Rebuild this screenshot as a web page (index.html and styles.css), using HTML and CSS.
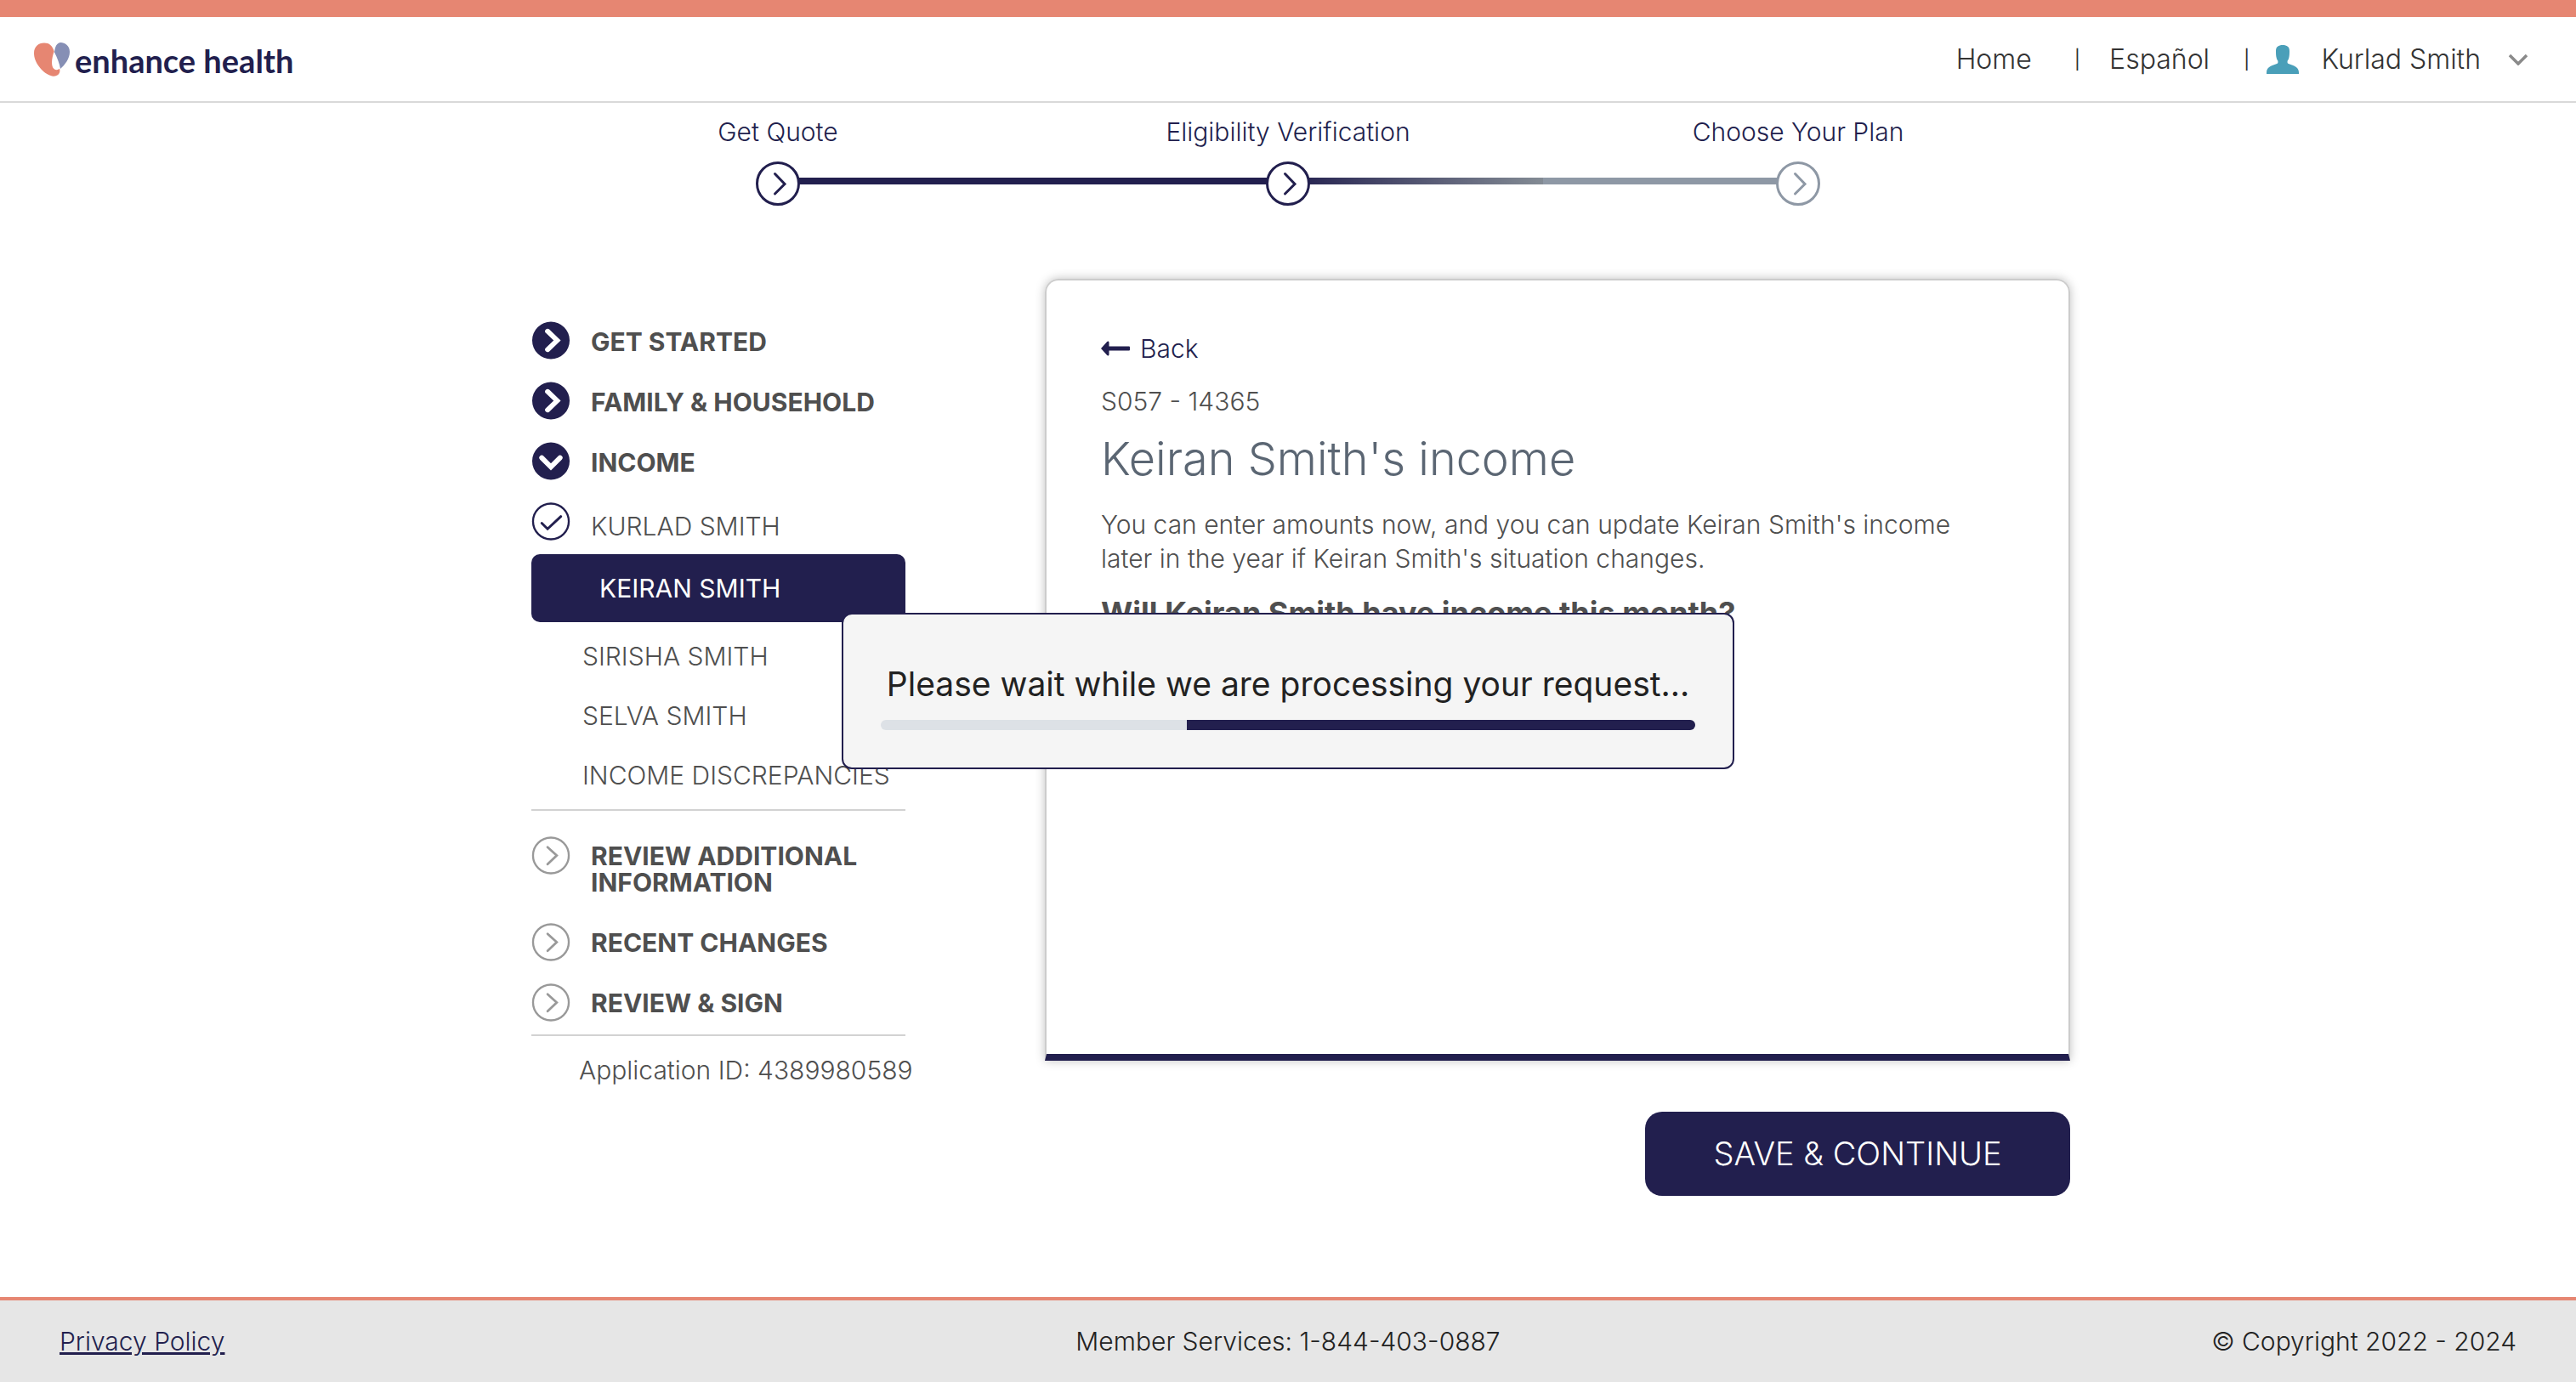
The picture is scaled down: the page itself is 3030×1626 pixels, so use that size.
FILE: index.html
```html
<!DOCTYPE html>
<html lang="en">
<head>
<meta charset="utf-8">
<meta name="viewport" content="width=device-width, initial-scale=1">
<title>Income - enhance health</title>
<link rel="stylesheet" href="styles.css">
</head>
<body>
<svg class="sprite" aria-hidden="true">
  <symbol id="i-step" viewBox="0 0 52 52"><circle cx="26" cy="26" r="24.5" fill="#fff" stroke="currentColor" stroke-width="3"/><path d="M22.500 14.500 34 26.500 22.500 38" fill="none" stroke="currentColor" stroke-width="3" stroke-linecap="round"/></symbol>
  <symbol id="i-solid" viewBox="0 0 46 46"><circle cx="23" cy="23" r="22.500" fill="currentColor"/><path d="M19 12 30.500 23 19 34" fill="none" stroke="#fff" stroke-width="6" stroke-linecap="round" stroke-linejoin="miter"/></symbol>
  <symbol id="i-open" viewBox="0 0 46 46"><circle cx="23" cy="23" r="22.500" fill="currentColor"/><path d="M12 19 23 30 34 19" fill="none" stroke="#fff" stroke-width="6" stroke-linecap="round"/></symbol>
  <symbol id="i-check" viewBox="0 0 46 46"><circle cx="23" cy="23" r="21.500" fill="none" stroke="currentColor" stroke-width="2.400"/><path d="M12 25 19 32 35 17" fill="none" stroke="currentColor" stroke-width="3" stroke-linecap="round"/></symbol>
  <symbol id="i-next" viewBox="0 0 46 46"><circle cx="23" cy="23" r="21.500" fill="none" stroke="currentColor" stroke-width="2.400"/><path d="M19 13 30 23 19 33.500" fill="none" stroke="currentColor" stroke-width="2.800" stroke-linecap="round"/></symbol>
</svg>

<header class="site-header">
  <a class="logo" href="#">
    <svg class="logo-mark" viewBox="0 0 42 40" aria-hidden="true">
      <path fill="#e68672" d="M12 .5C5 .5 0 5 0 12.500c0 11 9.500 22.500 19 26.300 5 2 10.500.5 11.300-4.500.2-1.500 0-2.800-.3-3.500-1.500 1.700-4.500 2-6.500.2-4-3.500-2.500-13.500.2-20.500C21.500 3.500 18 .5 12 .5z"/>
      <path fill="#868fb5" d="M31.500 0c4.500 0 10.500 3.500 10.500 11 0 8-5.500 15-11 20-1-6-3.500-13-7-19.500C24.500 5 27 0 31.500 0z"/>
    </svg>
    <span>enhance health</span>
  </a>
  <nav class="top-nav" aria-label="Account">
    <a href="#">Home</a>
    <span class="bar">|</span>
    <a href="#">Español</a>
    <span class="bar bar-user">|</span>
    <button class="user" type="button">
      <svg class="user-icon" viewBox="0 0 38 34" aria-hidden="true"><path fill="#4a9fb9" d="M19 0c5 0 8 2 8 7 0 4-.2 6-.7 8-.3 1.500-.9 2.500-1.600 3.500-.3 1.600-.2 2.700.6 3.200C30 23.700 38 25 38 32v2H0v-2c0-7 8-8.300 12.700-10.300.8-.5.900-1.600.6-3.200-.7-1-1.300-2-1.600-3.500-.5-2-.7-4-.7-8 0-5 3-7 8-7z"/></svg>
      <span>Kurlad Smith</span>
      <svg class="user-caret" viewBox="0 0 24 14" aria-hidden="true"><path d="M2 2l10 10L22 2" fill="none" stroke="#8a8a8a" stroke-width="3.500"/></svg>
    </button>
  </nav>
</header>

<ol class="steps">
  <li class="step done"><span>Get Quote</span><svg class="step-icon" aria-hidden="true"><use href="#i-step"/></svg></li>
  <li class="step current"><span>Eligibility Verification</span><svg class="step-icon" aria-hidden="true"><use href="#i-step"/></svg></li>
  <li class="step todo"><span>Choose Your Plan</span><svg class="step-icon" aria-hidden="true"><use href="#i-step"/></svg></li>
</ol>

<main class="content">
  <nav class="side" aria-label="Application sections">
    <ul class="group">
      <li class="row"><svg class="icon" aria-hidden="true"><use href="#i-solid"/></svg><a class="section" href="#">GET STARTED</a></li>
      <li class="row"><svg class="icon" aria-hidden="true"><use href="#i-solid"/></svg><a class="section" href="#">FAMILY &amp; HOUSEHOLD</a></li>
      <li class="row"><svg class="icon" aria-hidden="true"><use href="#i-open"/></svg><a class="section" href="#">INCOME</a></li>
      <li class="row"><svg class="icon" aria-hidden="true"><use href="#i-check"/></svg><a class="person" href="#">KURLAD SMITH</a></li>
    </ul>
    <a class="active" href="#" aria-current="page">KEIRAN SMITH</a>
    <ul class="sub">
      <li><a href="#">SIRISHA SMITH</a></li>
      <li><a href="#">SELVA SMITH</a></li>
      <li><a href="#">INCOME DISCREPANCIES</a></li>
    </ul>
    <ul class="group pending">
      <li class="row"><svg class="icon" aria-hidden="true"><use href="#i-next"/></svg><a class="section" href="#">REVIEW ADDITIONAL INFORMATION</a></li>
      <li class="row"><svg class="icon" aria-hidden="true"><use href="#i-next"/></svg><a class="section" href="#">RECENT CHANGES</a></li>
      <li class="row"><svg class="icon" aria-hidden="true"><use href="#i-next"/></svg><a class="section" href="#">REVIEW &amp; SIGN</a></li>
    </ul>
    <p class="app-id">Application ID: 4389980589</p>
  </nav>

  <div class="main-col">
    <section class="card">
      <a class="back" href="#"><svg class="back-icon" viewBox="0 0 34 18" aria-hidden="true"><path fill="currentColor" d="M0 9 7 1.200C8 0 9.500.4 9.500 2v4.500H33q1 0 1 1v3q0 1-1 1H9.500V16c0 1.600-1.500 2-2.500.8z"/></svg>Back</a>
      <p class="code">S057 - 14365</p>
      <h1>Keiran Smith's income</h1>
      <p class="intro">You can enter amounts now, and you can update Keiran Smith's income later in the year if Keiran Smith's situation changes.</p>
      <h2>Will Keiran Smith have income this month?</h2>
    </section>
    <button class="save" type="button">SAVE &amp; CONTINUE</button>
  </div>
</main>

<footer class="site-footer">
  <a href="#">Privacy Policy</a>
  <span>Member Services: 1-844-403-0887</span>
  <span class="copy">© Copyright 2022 - 2024</span>
</footer>

<div class="wait" role="dialog" aria-labelledby="wait-text">
  <p id="wait-text">Please wait while we are processing your request...</p>
  <div class="track" role="progressbar" aria-labelledby="wait-text"><div class="fill"></div></div>
</div>
</body>
</html>
```
FILE: styles.css
```css
:root {
  --navy: #221f4e;
  --coral: #e68672;
  --text: #4f4f4f;
  --slate: #8e98a5;
}

* { box-sizing: border-box; }

body {
  margin: 0;
  min-height: 100vh;
  display: flex;
  flex-direction: column;
  background: #fff;
  color: var(--text);
  font: 300 30px/40px Inter, "Open Sans", sans-serif;
}

a { color: inherit; text-decoration: none; }
button { font: inherit; color: inherit; border: 0; background: none; cursor: pointer; }
ul, ol { list-style: none; margin: 0; padding: 0; }
h1, h2, p { margin: 0; }
.sprite { display: none; }

.site-header {
  display: flex;
  justify-content: space-between;
  align-items: center;
  border-top: 20px solid var(--coral);
  border-bottom: 2px solid #d9d9d9;
  padding: 20px 56px 19px 40px;
}
.logo {
  display: flex;
  align-items: center;
  gap: 6px;
  height: 60px;
  color: var(--navy);
  font: 700 38px/40px Lato, sans-serif;
}
.logo-mark { width: 42px; height: 40px; }
.logo span { padding-top: 2px; }
.top-nav {
  display: flex;
  align-items: center;
  color: #333;
  font-size: 32px;
}
.bar { padding: 0 34px 0 50px; font-size: 22px; font-weight: 400; }
.bar-user { padding: 0 20px 0 40px; }
.user { display: flex; align-items: center; padding: 0; }
.user-icon { width: 38px; height: 34px; margin-right: 26px; }
.user-caret { width: 24px; height: 14px; margin-left: 32px; }

.steps {
  display: grid;
  grid-template-columns: repeat(3, 1fr);
  width: 100%;
  max-width: 1800px;
  margin: 0 auto;
  padding-top: 14px;
  color: var(--navy);
}
.step {
  position: relative;
  display: flex;
  flex-direction: column;
  align-items: center;
  gap: 15px;
}
.step-icon { position: relative; z-index: 1; width: 52px; height: 52px; }
.todo .step-icon { color: var(--slate); }
.done::after, .current::after {
  content: "";
  position: absolute;
  left: 50%;
  bottom: 25px;
  width: 100%;
  height: 8px;
  background: var(--navy);
}
.current::after {
  background: linear-gradient(to right, var(--navy), #838b94 50%, var(--slate) 50%);
}

.content {
  display: grid;
  grid-template-columns: minmax(0, 440fr) minmax(0, 1206fr);
  column-gap: 164px;
  width: 100%;
  max-width: 1840px;
  margin: 0 auto;
  padding: 86px 0 119px 30px;
}

.side { padding-top: 50px; }
.group { display: grid; gap: 26px; color: var(--text); }
.row { display: flex; align-items: flex-start; gap: 24px; height: 45px; }
.icon { flex: none; width: 46px; height: 45px; color: var(--navy); }
.section { padding-top: 9px; font-weight: 700; line-height: 31px; }
.person { padding-top: 8px; }
.active {
  display: block;
  margin-top: 16px;
  padding: 20px 80px;
  border-radius: 10px;
  background: var(--navy);
  color: #fff;
  font-weight: 400;
}
.sub {
  display: grid;
  gap: 30px;
  padding: 20px 0 20px 60px;
  border-bottom: 2px solid #d2d2d2;
  white-space: nowrap;
}
.pending {
  padding: 30px 0 15px;
  border-bottom: 2px solid #d2d2d2;
}
.pending .row { height: auto; }
.pending .icon { color: #999; }
.pending .section { padding: 8px 0 6px; }
.app-id { padding: 20px 0 0 56px; white-space: nowrap; }

.main-col { display: flex; flex-direction: column; align-items: flex-end; gap: 60px; }
.card {
  width: 100%;
  min-height: 920px;
  padding: 60px 64px;
  border: 2px solid #ccc;
  border-bottom: 8px solid var(--navy);
  border-radius: 16px 16px 0 0;
  box-shadow: 0 0 12px rgba(0, 0, 0, .25);
}
.back { display: flex; align-items: center; gap: 12px; color: var(--navy); }
.back-icon { width: 34px; height: 18px; }
.code { padding-top: 22px; }
h1 {
  padding-top: 12px;
  color: #5b6673;
  font-size: 54px;
  font-weight: 300;
  line-height: 72px;
}
.intro { max-width: 1040px; padding-top: 21px; }
h2 { padding-top: 24px; font-size: 36px; line-height: 40px; }
.save {
  width: 500px;
  padding: 29px 0 30px;
  border-radius: 20px;
  background: var(--navy);
  color: #fff;
  font-size: 38px;
}

.site-footer {
  display: grid;
  grid-template-columns: 1fr auto 1fr;
  margin-top: auto;
  padding: 28px 70px;
  border-top: 4px solid var(--coral);
  background: #e6e6e6;
  color: #222;
}
.site-footer a {
  justify-self: start;
  color: var(--navy);
  text-decoration: underline;
}
.copy { text-align: right; }

.wait {
  position: fixed;
  z-index: 5;
  top: 50%;
  left: 50%;
  transform: translate(-50%, -50%);
  width: 1050px;
  max-width: 96%;
  padding: 58px 44px 44px;
  border: 2px solid var(--navy);
  border-radius: 12px;
  background: #f5f5f5;
  color: #222;
  font-size: 39px;
  font-weight: 400;
  line-height: 48px;
  text-align: center;
}
.track {
  margin-top: 18px;
  height: 12px;
  border-radius: 6px;
  background: #dde1e6;
  overflow: hidden;
}
.fill { width: 62.4%; height: 100%; margin-left: auto; background: var(--navy); }
```
